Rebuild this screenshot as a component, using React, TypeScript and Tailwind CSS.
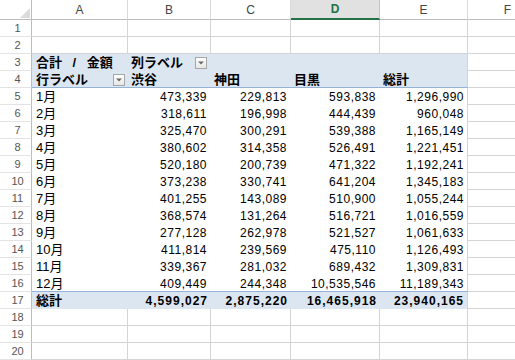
const font = { fontFamily: '"Liberation Sans", "Noto Sans CJK JP", sans-serif' }

type Row = { label: string; b: string; c: string; d: string; e: string }

const rows: Row[] = [
  { label: '1月', b: '473,339', c: '229,813', d: '593,838', e: '1,296,990' },
  { label: '2月', b: '318,611', c: '196,998', d: '444,439', e: '960,048' },
  { label: '3月', b: '325,470', c: '300,291', d: '539,388', e: '1,165,149' },
  { label: '4月', b: '380,602', c: '314,358', d: '526,491', e: '1,221,451' },
  { label: '5月', b: '520,180', c: '200,739', d: '471,322', e: '1,192,241' },
  { label: '6月', b: '373,238', c: '330,741', d: '641,204', e: '1,345,183' },
  { label: '7月', b: '401,255', c: '143,089', d: '510,900', e: '1,055,244' },
  { label: '8月', b: '368,574', c: '131,264', d: '516,721', e: '1,016,559' },
  { label: '9月', b: '277,128', c: '262,978', d: '521,527', e: '1,061,633' },
  { label: '10月', b: '411,814', c: '239,569', d: '475,110', e: '1,126,493' },
  { label: '11月', b: '339,367', c: '281,032', d: '689,432', e: '1,309,831' },
  { label: '12月', b: '409,449', c: '244,348', d: '10,535,546', e: '11,189,343' },
]

const grid = 'grid grid-cols-[32px_96px_83px_80px_89px_88px_80px]'
const cellText = 'h-[17px] pt-[2px] leading-[15px] text-[12px] text-black overflow-hidden whitespace-nowrap'
const jpText = 'h-[17px] pt-[1px] leading-[16px] text-[13px] text-black overflow-hidden whitespace-nowrap'

function RowHead({ n }: { n: number }) {
  return (
    <div className="h-[17px] pl-[4px] text-center text-[11px] leading-[17px] text-[#555] border-r border-b border-r-[#bcbcbc] border-b-[#e3e3e3] bg-white">
      {n}
    </div>
  )
}

function Blank() {
  return <div className="h-[17px] border-r border-b border-[#d4d4d4]" />
}

function DropBtn() {
  return (
    <div className="mt-[2px] w-[12px] h-[12px] border border-[#a6a6a6] bg-gradient-to-b from-white to-[#e6e6e6] flex items-center justify-center shrink-0">
      <svg width="6" height="4" viewBox="0 0 6 4">
        <path d="M0 0.5h6L3 3.5z" fill="#6b6b6b" />
      </svg>
    </div>
  )
}

export default function App() {
  return (
    <div className="w-[515px] h-[360px] overflow-hidden bg-white" style={font}>
      {/* column headers */}
      <div className={`${grid} h-[20px]`}>
        <div className="relative border-r border-b border-r-[#bcbcbc] border-b-[#bcbcbc]">
          <svg className="absolute left-[20px] top-[8px]" width="10" height="10" viewBox="0 0 10 10">
            <path d="M10 0V10H0z" fill="#dcdcdc" />
          </svg>
        </div>
        {['A', 'B', 'C', 'D', 'E', 'F'].map((l) =>
          l === 'D' ? (
            <div key={l} className="flex items-center justify-center text-[12px] font-bold text-[#217346] bg-[#e1e1e1] border-r border-r-[#c6c6c6] border-b-2 border-b-[#217346]">
              {l}
            </div>
          ) : (
            <div key={l} className="flex items-center justify-center text-[12px] text-[#444] border-r border-b border-r-[#dadada] border-b-[#bcbcbc]">
              {l}
            </div>
          )
        )}
      </div>

      {/* rows 1-2 */}
      {[1, 2].map((n) => (
        <div key={n} className={grid}>
          <RowHead n={n} />
          <Blank /><Blank /><Blank /><Blank /><Blank /><Blank />
        </div>
      ))}

      {/* row 3 */}
      <div className={grid}>
        <RowHead n={3} />
        <div className={`${jpText} pl-[4px] font-bold bg-[#dce6f1] [word-spacing:7px]`}>合計 / 金額</div>
        <div className={`${jpText} pl-[3px] pr-[4px] font-bold bg-[#dce6f1] flex justify-between items-start`}>
          <span>列ラベル</span>
          <DropBtn />
        </div>
        <div className="h-[17px] bg-[#dce6f1]" />
        <div className="h-[17px] bg-[#dce6f1]" />
        <div className="h-[17px] bg-[#dce6f1] border-r border-[#d4d4d4]" />
        <Blank />
      </div>

      {/* row 4 */}
      <div className={grid}>
        <RowHead n={4} />
        <div className={`${jpText} pl-[4px] pr-[3px] font-bold bg-[#dce6f1] border-b border-[#95b3d7] flex justify-between items-start`}>
          <span>行ラベル</span>
          <DropBtn />
        </div>
        {['渋谷', '神田', '目黒', '総計'].map((h, i) => (
          <div key={h} className={`${jpText} pl-[3px] font-bold bg-[#dce6f1] border-b border-b-[#95b3d7] ${i === 3 ? 'border-r border-r-[#d4d4d4]' : ''}`}>
            {h}
          </div>
        ))}
        <Blank />
      </div>

      {/* data rows */}
      {rows.map((r, i) => {
        const last = i === rows.length - 1
        const bb = last ? 'border-b border-b-[#95b3d7]' : ''
        return (
          <div key={r.label} className={grid}>
            <RowHead n={i + 5} />
            <div className={`${jpText} pl-[4px] ${bb}`}>{r.label}</div>
            {[r.b, r.c, r.d].map((v, j) => (
              <div key={j} className={`${cellText} pr-[4px] text-right tracking-[0.5px] ${bb}`}>{v}</div>
            ))}
            <div className={`${cellText} pr-[3px] text-right tracking-[0.5px] border-r border-r-[#d4d4d4] ${bb}`}>{r.e}</div>
            <Blank />
          </div>
        )
      })}

      {/* row 17 total */}
      <div className={grid}>
        <RowHead n={17} />
        <div className={`${jpText} pl-[4px] font-bold bg-[#dce6f1]`}>総計</div>
        {['4,599,027', '2,875,220', '16,465,918'].map((v) => (
          <div key={v} className={`${cellText} pr-[3px] text-right font-bold tracking-[1px] bg-[#dce6f1]`}>{v}</div>
        ))}
        <div className={`${cellText} pr-[3px] text-right font-bold tracking-[1px] bg-[#dce6f1] border-r border-r-[#d4d4d4]`}>23,940,165</div>
        <Blank />
      </div>

      {/* rows 18-20 */}
      {[18, 19, 20].map((n) => (
        <div key={n} className={grid}>
          <RowHead n={n} />
          <Blank /><Blank /><Blank /><Blank /><Blank /><Blank />
        </div>
      ))}
    </div>
  )
}
